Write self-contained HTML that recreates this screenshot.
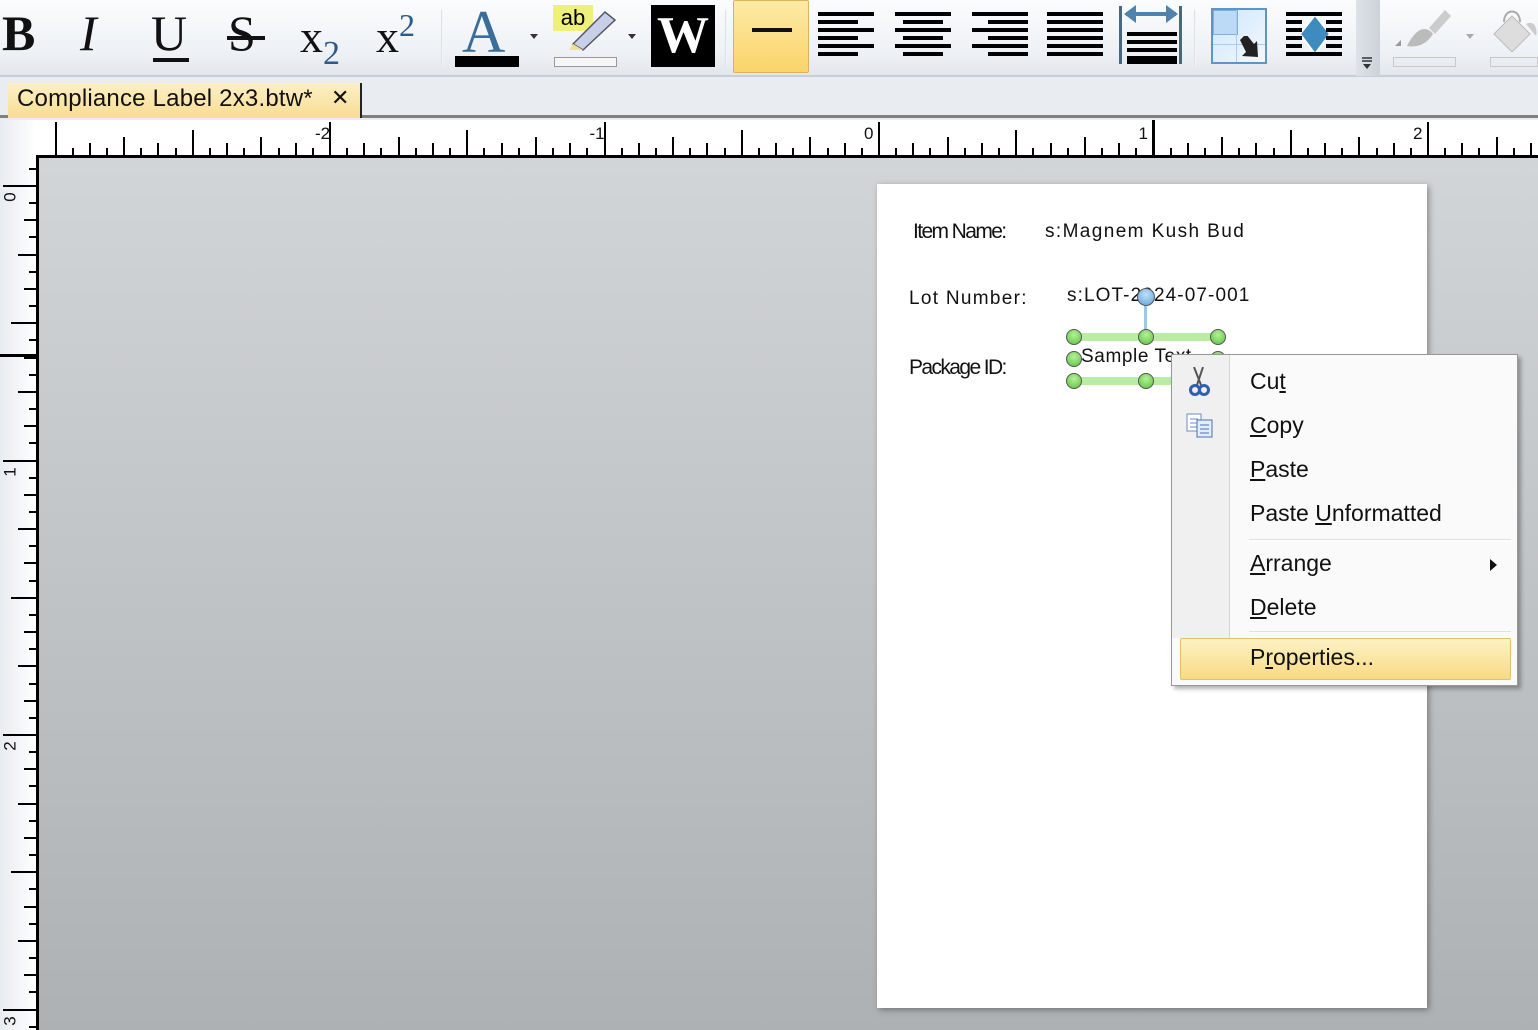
<!DOCTYPE html>
<html><head><meta charset="utf-8"><style>
*{margin:0;padding:0;box-sizing:border-box}
body{width:1538px;height:1030px;overflow:hidden;position:relative;font-family:"Liberation Sans",sans-serif;background:#e9ecf0}
.abs{position:absolute}
#tb{left:0;top:0;width:1538px;height:77px;background:linear-gradient(#fbfcfd,#eef1f5 70%,#e3e7ec);border-bottom:2px solid #c9ced5}
.serif{font-family:"Liberation Serif",serif;color:#111}
.sep{width:2px;height:56px;top:10px;background:linear-gradient(90deg,#d3d7dc,#fff)}
.ln{position:absolute;height:4px;background:#000}
#tabbar{left:0;top:79px;width:1538px;height:39px;background:#e9ecf0;border-bottom:3px solid #808080}
#tab{left:8px;top:83px;width:354px;height:35px;background:linear-gradient(#fdf0c8,#f8dc90);border-right:2px solid #222;font-size:24px;color:#111;padding:2px 0 0 9px;letter-spacing:0.2px}
#rt{left:0;top:120px;width:1538px;height:36px;background:#fff}
#rl{left:0;top:120px;width:36px;height:910px;background:linear-gradient(90deg,#e8ebf0,#fff)}
#canvas{left:36px;top:155px;width:1502px;height:875px;background:linear-gradient(#d2d5d8,#aeb1b4);border-top:3px solid #000;border-left:3px solid #000}
#page{left:877px;top:184px;width:550px;height:824px;background:#fff;box-shadow:2px 2px 6px rgba(0,0,0,.35)}
.lbl{position:absolute;font-size:21px;color:#111;white-space:nowrap}
.h{position:absolute;width:16px;height:16px;border-radius:50%;background:radial-gradient(circle at 50% 35%,#b6f09a,#58c23a);border:1.5px solid #555}
#menu{left:1171px;top:354px;width:347px;height:332px;background:#fafafa;border:1px solid #979797;box-shadow:3px 3px 4px rgba(0,0,0,.3)}
.mi{position:absolute;left:78px;font-size:23px;color:#111}
.mi u{text-decoration:underline}
.msep{position:absolute;left:77px;right:6px;height:2px;background:#e0e0e0;border-bottom:1px solid #fff}
</style></head><body>
<div id="tb" class="abs">
 <div class="abs serif" style="left:2px;top:4px;font-size:50px;font-weight:bold">B</div>
 <div class="abs serif" style="left:80px;top:4px;font-size:50px;font-style:italic">I</div>
 <div class="abs serif" style="left:151px;top:4px;font-size:50px">U</div>
 <div class="abs" style="left:153px;top:58px;width:36px;height:4px;background:#111"></div>
 <div class="abs serif" style="left:228px;top:4px;font-size:50px">S</div>
 <div class="abs" style="left:227px;top:36px;width:38px;height:4px;background:#111"></div>
 <div class="abs serif" style="left:300px;top:10px;font-size:46px">x<span style="font-size:34px;color:#2a5b8f;position:relative;top:12px">2</span></div>
 <div class="abs serif" style="left:376px;top:10px;font-size:46px">x<span style="font-size:32px;color:#2a5b8f;position:relative;top:-16px">2</span></div>
 <div class="abs sep" style="left:441px"></div>
 <div class="abs serif" style="left:462px;top:-2px;font-size:60px;color:#3b6d9a">A</div>
 <div class="abs" style="left:455px;top:56px;width:64px;height:11px;background:#000"></div>
 <div class="abs" style="left:530px;top:34px;border:4px solid transparent;border-top:5px solid #333"></div>
 <div class="abs" style="left:553px;top:5px;width:40px;height:26px;background:#eef07a;font-size:22px;text-align:center;line-height:26px">ab</div>
 <svg class="abs" style="left:565px;top:6px" width="55" height="45"><path d="M8 38 L40 6 L50 14 L18 44 Z" fill="#c8d0e8" stroke="#556" stroke-width="1.5"/><path d="M8 38 L18 44 L4 44 Z" fill="#f5e08a"/></svg>
 <div class="abs" style="left:554px;top:57px;width:63px;height:10px;border:1px solid #999;background:#f6f6f6"></div>
 <div class="abs" style="left:628px;top:34px;border:4px solid transparent;border-top:5px solid #333"></div>
 <div class="abs" style="left:651px;top:5px;width:64px;height:62px;background:#000;color:#fff;font-family:'Liberation Serif',serif;font-weight:bold;font-size:52px;text-align:center;line-height:62px">W</div>
 <div class="abs sep" style="left:725px"></div>
 <div class="abs" style="left:733px;top:0;width:76px;height:73px;background:linear-gradient(#fdeaa6,#fad46a);border:1px solid #d9b45a;border-radius:2px"></div>
 <div class="abs" style="left:752px;top:28px;width:40px;height:4px;background:#111"></div>
 <div class="abs" style="left:1119px;top:6px;width:3px;height:58px;background:#4a6685"></div>
 <div class="abs" style="left:1179px;top:6px;width:3px;height:58px;background:#4a6685"></div>
 <svg class="abs" style="left:1122px;top:4px" width="58" height="20"><path d="M4 10 H54" stroke="#4f83ad" stroke-width="4"/><path d="M2 10 L14 1 V19 Z M56 10 L44 1 V19Z" fill="#4f83ad"/></svg>
 <div class="abs sep" style="left:1194px"></div>
 <div class="abs" style="left:1211px;top:8px;width:56px;height:56px;background:linear-gradient(135deg,#cfe6fb,#f2f8fe);border:2px solid #5b95c9"></div>
 <div class="abs" style="left:1213px;top:10px;width:25px;height:25px;border:1px solid #7fb0dd;background:#bcdaf6"></div>
 <div class="abs" style="left:1236px;top:10px;width:1px;height:52px;background:#a9cdee"></div>
 <div class="abs" style="left:1213px;top:44px;width:52px;height:1px;background:#a9cdee"></div>
 <svg class="abs" style="left:1238px;top:36px" width="24" height="24"><path d="M2 4 L8 -2 L16 8 L19 5 L20 21 L4 20 L8 16 Z" fill="#222"/></svg>
 <svg class="abs" style="left:1298px;top:14px" width="34" height="42"><polygon points="17,1 32,20 17,40 2,20" fill="#3e8bc0" stroke="#fff" stroke-width="2"/></svg>
 <div class="abs" style="left:1356px;top:0;width:24px;height:76px;background:linear-gradient(90deg,#dfe3e8,#cdd2d8)"></div>
 <svg class="abs" style="left:1361px;top:56px" width="12" height="14"><path d="M1 2H11M1 5H11" stroke="#333" stroke-width="1.5"/><path d="M2 8H10L6 13Z" fill="#333"/></svg>
 <svg class="abs" style="left:1393px;top:6px" width="60" height="46"><path d="M2 40 L8 34 L8 40Z" fill="#999"/><path d="M14 40 C24 20 34 20 40 28 C34 38 24 42 14 40Z" fill="#bbb"/><path d="M36 22 L52 4 L58 10 L42 28Z" fill="#ccc"/></svg>
 <div class="abs" style="left:1393px;top:57px;width:63px;height:10px;border:1px solid #c8c8c8"></div>
 <div class="abs" style="left:1466px;top:34px;border:4px solid transparent;border-top:5px solid #aaa"></div>
 <svg class="abs" style="left:1490px;top:4px" width="48" height="48"><path d="M4 30 L22 12 L40 30 L22 48Z" fill="#ddd" stroke="#bbb"/><path d="M14 18 C14 4 30 4 30 18" stroke="#aaa" fill="none" stroke-width="2"/><path d="M36 20 C44 16 48 24 46 32" fill="#ccc"/></svg>
 <div class="abs" style="left:1490px;top:57px;width:48px;height:10px;border:1px solid #c8c8c8"></div>
</div>
<div id="tabbar" class="abs"></div>
<div id="tab" class="abs">Compliance Label 2x3.btw*<span style="position:absolute;left:323px;top:2px;font-size:22px">✕</span></div>
<div id="rt" class="abs"></div>
<div id="rl" class="abs"></div>
<div id="canvas" class="abs"></div>
<div id="page" class="abs">
 <div class="lbl" style="left:36px;top:36px;letter-spacing:-1.6px">Item Name:</div>
 <div class="lbl" style="left:168px;top:37px;letter-spacing:1.4px;font-size:19px">s:Magnem Kush Bud</div>
 <div class="lbl" style="left:32px;top:104px;letter-spacing:1.3px;font-size:19px">Lot Number:</div>
 <div class="lbl" style="left:190px;top:101px;font-size:19px;letter-spacing:1.1px">s:LOT-2024-07-001</div>
 <div class="lbl" style="left:32px;top:172px;letter-spacing:-1.6px">Package ID:</div>
 <div class="lbl" style="left:204px;top:162px;font-size:19px;letter-spacing:0.6px">Sample Text</div>
</div>
<div class="abs" style="left:1074px;top:333px;width:144px;height:8px;background:#a8e890;opacity:.8"></div>
<div class="abs" style="left:1074px;top:377px;width:144px;height:8px;background:#a8e890;opacity:.8"></div>
<div class="abs" style="left:1144px;top:297px;width:3px;height:40px;background:#9cc6ec"></div>
<div class="h" style="left:1066px;top:329px"></div><div class="h" style="left:1138px;top:329px"></div><div class="h" style="left:1210px;top:329px"></div>
<div class="h" style="left:1066px;top:351px"></div><div class="h" style="left:1210px;top:351px"></div>
<div class="h" style="left:1066px;top:373px"></div><div class="h" style="left:1138px;top:373px"></div>
<div class="h" style="left:1137px;top:288px;width:18px;height:18px;background:radial-gradient(circle at 50% 35%,#bfe0fa,#5aa2da)"></div>
<div id="menu" class="abs">
 <div class="abs" style="left:0;top:0;width:58px;height:283px;background:#f0f0f0;border-right:1px solid #d6d6d6"></div>
 <svg class="abs" style="left:16px;top:12px" width="22" height="30"><path d="M6 0 L13 18 M15 0 L9 18" stroke="#555" stroke-width="2"/><circle cx="7" cy="23" r="4.5" fill="none" stroke="#2f5fb0" stroke-width="3"/><circle cx="16" cy="23" r="4.5" fill="none" stroke="#2f5fb0" stroke-width="3"/></svg>
 <svg class="abs" style="left:14px;top:58px" width="30" height="26"><rect x="1" y="1" width="14" height="17" fill="#fff" stroke="#6b8cc0"/><path d="M4 6h8M4 10h8M4 14h8" stroke="#6b8cc0"/><rect x="11" y="7" width="15" height="17" fill="#e4eefa" stroke="#4a6fb0"/><path d="M14 12h9M14 16h9M14 20h9" stroke="#4a6fb0"/></svg>
 <div class="mi" style="top:13px">Cu<u>t</u></div>
 <div class="mi" style="top:57px"><u>C</u>opy</div>
 <div class="mi" style="top:101px"><u>P</u>aste</div>
 <div class="mi" style="top:145px">Paste <u>U</u>nformatted</div>
 <div class="msep" style="top:184px"></div>
 <div class="mi" style="top:195px"><u>A</u>rrange</div>
 <div class="abs" style="left:318px;top:204px;border:6px solid transparent;border-left:7px solid #111;border-right:0"></div>
 <div class="mi" style="top:239px"><u>D</u>elete</div>
 <div class="msep" style="top:276px"></div>
 <div class="abs" style="left:8px;top:283px;width:331px;height:42px;background:linear-gradient(#fdf2c6,#f8da82);border:1px solid #e2c16a;border-radius:2px"></div>
 <div class="mi" style="top:289px">P<u>r</u>operties...</div>
</div>
<script>
var tb=document.getElementById('tb');
function L(x,y,w){var d=document.createElement('div');d.className='ln';d.style.left=x+'px';d.style.top=y+'px';d.style.width=w+'px';tb.appendChild(d);}
var ys=[12,20,28,36,44,52];
ys.forEach(function(y,i){var s=i%2==1;
 L(818,y,s?40:56);
 L(s?903:895,y,s?40:56);
 L(s?988:972,y,s?40:56);
 L(1047,y,56);
 if(y>24)L(1127,y+4,50);
 if(i==0||i==5)L(1286,y,56);else{L(1286,y,16);L(1326,y,16);}
});
L(1127,60,50);
function T(p,st){var d=document.createElement('div');d.style.cssText='position:absolute;background:#000;'+st;document.body.appendChild(d);}
var ppi=274.5;
function len(i){return i%16==0?33:i%8==0?25:i%4==0?18:i%2==0?12:7;}
for(var i=-52;i<=48;i++){var x=878+i*ppi/16;if(x<40||x>1538)continue;var l=len(((i%16)+16)%16);T(0,'left:'+Math.round(x)+'px;top:'+(155-l)+'px;width:2px;height:'+l+'px');}
for(var i=-2;i<=60;i++){var y=185+i*ppi/16;if(y<158||y>1030)continue;var l=len(((i%16)+16)%16);T(0,'top:'+Math.round(y)+'px;left:'+(36-l)+'px;height:2px;width:'+l+'px');}
T(0,'left:1152px;top:120px;width:3px;height:36px');
T(0,'left:0;top:354px;width:36px;height:3px');
function N(t,st){var d=document.createElement('div');d.textContent=t;d.style.cssText='position:absolute;font-size:17px;color:#111;'+st;document.body.appendChild(d);}
[-2,-1,0,1,2].forEach(function(n){N(n,'left:'+(878+n*ppi-14)+'px;top:124px;font-size:17px');});
[0,1,2,3].forEach(function(n){N(n,'left:6px;top:'+(185+n*ppi+2)+'px;transform:rotate(-90deg);font-size:17px');});
</script>
</body></html>
